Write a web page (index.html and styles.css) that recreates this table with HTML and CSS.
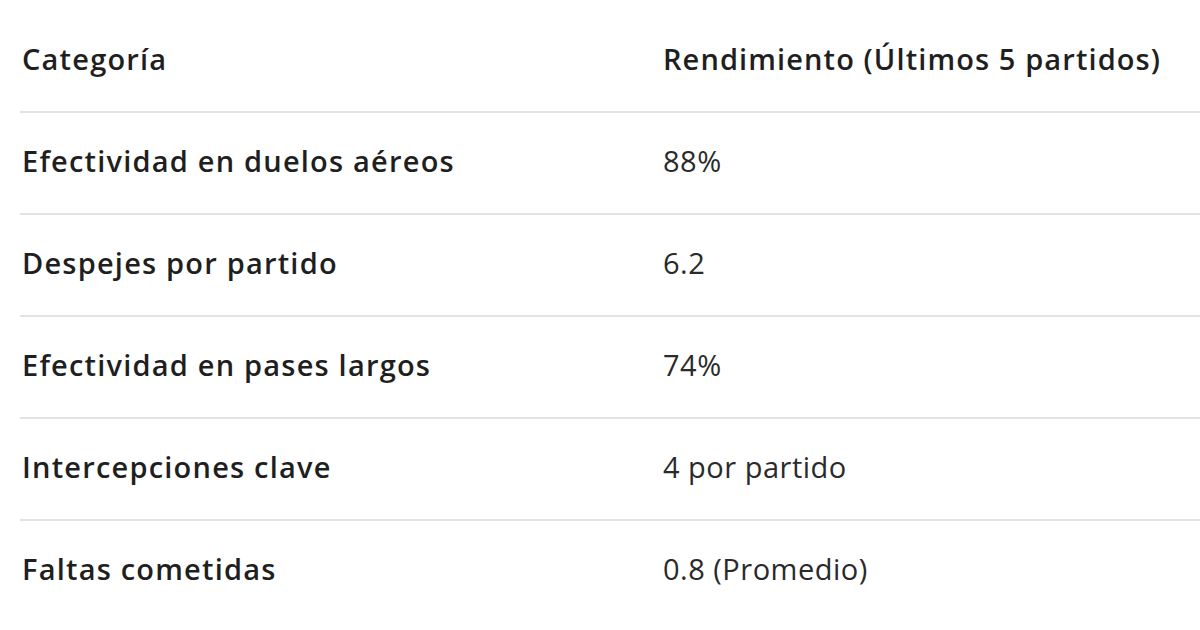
FILE: index.html
```html
<!DOCTYPE html>
<html lang="es">
<head>
<meta charset="utf-8">
<link rel="stylesheet" href="styles.css">
</head>
<body>
<div class="table">
  <div class="row head">
    <div class="cell c1">Categoría</div>
    <div class="cell c2">Rendimiento (Últimos 5 partidos)</div>
  </div>
  <div class="row">
    <div class="cell c1">Efectividad en duelos aéreos</div>
    <div class="cell c2">88%</div>
  </div>
  <div class="row">
    <div class="cell c1">Despejes por partido</div>
    <div class="cell c2">6.2</div>
  </div>
  <div class="row">
    <div class="cell c1">Efectividad en pases largos</div>
    <div class="cell c2">74%</div>
  </div>
  <div class="row">
    <div class="cell c1">Intercepciones clave</div>
    <div class="cell c2">4 por partido</div>
  </div>
  <div class="row last">
    <div class="cell c1">Faltas cometidas</div>
    <div class="cell c2">0.8 (Promedio)</div>
  </div>
</div>
</body>
</html>
```

FILE: styles.css
```css
html, body {
  margin: 0;
  padding: 0;
  background: #ffffff;
}
body {
  font-family: "Open Sans", "Liberation Sans", sans-serif;
  color: #1f1f1f;
  overflow: hidden;
  width: 1200px;
  height: 630px;
}
.table {
  margin-left: 20px;
  margin-top: 11px;
}
.row {
  display: grid;
  grid-template-columns: 643px 1fr;
  height: 100px;
  align-items: center;
  border-bottom: 2px solid #e3e3e3;
  font-size: 29px;
  white-space: nowrap;
}
.row.last {
  border-bottom: none;
}
.cell {
  padding-bottom: 5px;
}
.c1 {
  font-weight: 600;
  padding-left: 2px;
  letter-spacing: 1.2px;
}
.c2 {
  font-weight: 400;
  color: #2a2a2a;
  letter-spacing: 0.5px;
}
.head .c2 {
  font-weight: 600;
  color: #1f1f1f;
  letter-spacing: 1.1px;
}
```
